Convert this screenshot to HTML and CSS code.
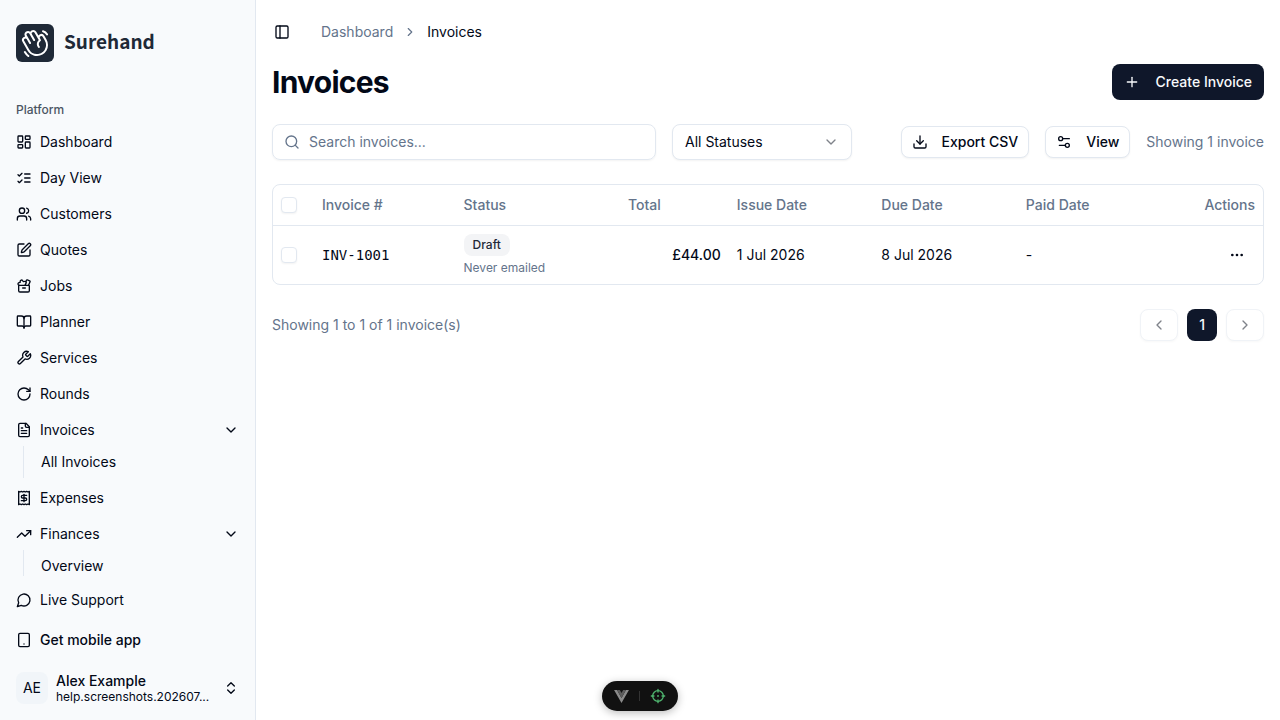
FILE: index.html
```html
<!DOCTYPE html>
<html lang="en">
<head>
  <meta charset="UTF-8">
  <title>Invoices - Surehand</title>
  <meta name="viewport" content="width=device-width,initial-scale=1">
  <link rel="stylesheet" href="styles.css">
</head>
<body>
  <div class="app">
    <aside class="sidebar">
      <a class="brand" href="#">
        <span class="brand-mark">
          <svg viewBox="0 0 256 256" fill="currentColor" aria-hidden="true"><path d="M220.17,100,202.86,70a28,28,0,0,0-38.24-10.25,27.69,27.69,0,0,0-9,8.34L138.2,38a28,28,0,0,0-48.48,0A28,28,0,0,0,48.15,74l1.59,2.76A27.67,27.67,0,0,0,38,80.45a28,28,0,0,0-10.24,38.25l40,69.32a87.47,87.47,0,0,0,53.43,41,88.56,88.56,0,0,0,22.92,3,88,88,0,0,0,76.06-132Zm-6.66,62.64A71.56,71.56,0,0,1,81.64,180l-40-69.32a12,12,0,0,1,20.78-12L81.63,132a8,8,0,1,0,13.85-8L62,66A12,12,0,1,1,82.78,54L114,108a8,8,0,1,0,13.85-8L103.57,58h0a12,12,0,1,1,20.78-12l33.42,57.9a48,48,0,0,0-5.54,60.6,8,8,0,0,0,13.24-9A32,32,0,0,1,172,112a8,8,0,0,0,2.13-10.4L168.23,90A12,12,0,1,1,189,78l17.31,30A71.56,71.56,0,0,1,213.51,162.64ZM184.25,31.71A8,8,0,0,1,194,26a59.62,59.62,0,0,1,36.53,28l.33.57a8,8,0,1,1-13.85,8l-.33-.57a43.67,43.67,0,0,0-26.8-20.5A8,8,0,0,1,184.25,31.71ZM80.89,237a8,8,0,0,1-11.23,1.33A119.56,119.56,0,0,1,40.06,204a8,8,0,0,1,13.86-8,103.67,103.67,0,0,0,25.64,29.72A8,8,0,0,1,80.89,237Z"/></svg>
        </span>
        <span class="brand-name">Surehand</span>
      </a>

      <nav class="nav">
        <div class="nav-label">Platform</div>
        <ul class="nav-list">
          <li><a class="nav-item" href="#"><svg class="icon" viewBox="0 0 24 24"><rect width="7" height="9" x="3" y="3" rx="1"/><rect width="7" height="5" x="14" y="3" rx="1"/><rect width="7" height="9" x="14" y="12" rx="1"/><rect width="7" height="5" x="3" y="16" rx="1"/></svg>Dashboard</a></li>
          <li><a class="nav-item" href="#"><svg class="icon" viewBox="0 0 24 24"><path d="m3 17 2 2 4-4"/><path d="m3 7 2 2 4-4"/><path d="M13 6h8"/><path d="M13 12h8"/><path d="M13 18h8"/></svg>Day View</a></li>
          <li><a class="nav-item" href="#"><svg class="icon" viewBox="0 0 24 24"><path d="M16 21v-2a4 4 0 0 0-4-4H6a4 4 0 0 0-4 4v2"/><circle cx="9" cy="7" r="4"/><path d="M22 21v-2a4 4 0 0 0-3-3.87"/><path d="M16 3.13a4 4 0 0 1 0 7.75"/></svg>Customers</a></li>
          <li><a class="nav-item" href="#"><svg class="icon" viewBox="0 0 24 24"><path d="M12 3H5a2 2 0 0 0-2 2v14a2 2 0 0 0 2 2h14a2 2 0 0 0 2-2v-7"/><path d="M18.375 2.625a1 1 0 0 1 3 3l-9.013 9.014a2 2 0 0 1-.853.505l-2.873.84a.5.5 0 0 1-.62-.62l.84-2.873a2 2 0 0 1 .506-.852z"/></svg>Quotes</a></li>
          <li><a class="nav-item" href="#"><svg class="icon" viewBox="0 0 24 24"><path d="M10 15h4"/><path d="m14.817 10.995-.971-1.45 1.034-1.232a2 2 0 0 0-2.025-3.238l-1.82.364L9.91 3.885a2 2 0 0 0-3.625.748L6.141 6.55l-1.725.426a2 2 0 0 0-.19 3.756l.657.27"/><path d="m18.822 10.995 2.26-5.38a1 1 0 0 0-.557-1.318L16.954 2.9a1 1 0 0 0-1.281.533l-.924 2.122"/><path d="M4 12.006A1 1 0 0 1 4.994 11H19a1 1 0 0 1 1 1v7a2 2 0 0 1-2 2H6a2 2 0 0 1-2-2z"/></svg>Jobs</a></li>
          <li><a class="nav-item" href="#"><svg class="icon" viewBox="0 0 24 24"><path d="M12 7v14"/><path d="M3 18a1 1 0 0 1-1-1V4a1 1 0 0 1 1-1h5a4 4 0 0 1 4 4 4 4 0 0 1 4-4h5a1 1 0 0 1 1 1v13a1 1 0 0 1-1 1h-6a3 3 0 0 0-3 3 3 3 0 0 0-3-3z"/></svg>Planner</a></li>
          <li><a class="nav-item" href="#"><svg class="icon" viewBox="0 0 24 24"><path d="M14.7 6.3a1 1 0 0 0 0 1.4l1.6 1.6a1 1 0 0 0 1.4 0l3.77-3.77a6 6 0 0 1-7.94 7.94l-6.91 6.91a2.12 2.12 0 0 1-3-3l6.91-6.91a6 6 0 0 1 7.94-7.94l-3.76 3.76z"/></svg>Services</a></li>
          <li><a class="nav-item" href="#"><svg class="icon" viewBox="0 0 24 24"><path d="M21 12a9 9 0 1 1-9-9c2.52 0 4.93 1 6.74 2.74L21 8"/><path d="M21 3v5h-5"/></svg>Rounds</a></li>
          <li>
            <button class="nav-item" type="button" aria-expanded="true"><svg class="icon" viewBox="0 0 24 24"><path d="M15 2H6a2 2 0 0 0-2 2v16a2 2 0 0 0 2 2h12a2 2 0 0 0 2-2V7Z"/><path d="M14 2v4a2 2 0 0 0 2 2h4"/><path d="M10 9H8"/><path d="M16 13H8"/><path d="M16 17H8"/></svg>Invoices<svg class="icon nav-end" viewBox="0 0 24 24"><path d="m6 9 6 6 6-6"/></svg></button>
            <ul class="nav-sub">
              <li><a href="#">All Invoices</a></li>
            </ul>
          </li>
          <li><a class="nav-item" href="#"><svg class="icon" viewBox="0 0 24 24"><path d="M4 2v20l2-1 2 1 2-1 2 1 2-1 2 1 2-1 2 1V2l-2 1-2-1-2 1-2-1-2 1-2-1-2 1Z"/><path d="M16 8h-6a2 2 0 1 0 0 4h4a2 2 0 1 1 0 4H8"/><path d="M12 17.5v-11"/></svg>Expenses</a></li>
          <li>
            <button class="nav-item" type="button" aria-expanded="true"><svg class="icon" viewBox="0 0 24 24"><path d="M22 7 13.5 15.5 8.5 10.5 2 17"/><path d="M16 7h6v6"/></svg>Finances<svg class="icon nav-end" viewBox="0 0 24 24"><path d="m6 9 6 6 6-6"/></svg></button>
            <ul class="nav-sub">
              <li><a href="#">Overview</a></li>
            </ul>
          </li>
        </ul>
      </nav>

      <div class="sidebar-footer">
        <a class="nav-item" href="#"><svg class="icon" viewBox="0 0 24 24"><path d="M7.9 20A9 9 0 1 0 4 16.1L2 22Z"/></svg>Live Support</a>
        <button class="nav-item medium" type="button"><svg class="icon" viewBox="0 0 24 24"><rect width="16" height="20" x="4" y="2" rx="2"/><path d="M12 18h.01"/></svg>Get mobile app</button>
        <button class="user" type="button">
          <span class="avatar">AE</span>
          <span class="user-text">
            <span class="user-name">Alex Example</span>
            <span class="user-mail">help.screenshots.202607...</span>
          </span>
          <svg class="icon" viewBox="0 0 24 24"><path d="m7 15 5 5 5-5"/><path d="m7 9 5-5 5 5"/></svg>
        </button>
      </div>
    </aside>

    <div class="page">
      <header class="topbar">
        <button class="toggle" type="button" aria-label="Toggle sidebar"><svg class="icon" viewBox="0 0 24 24"><rect width="18" height="18" x="3" y="3" rx="2"/><path d="M9 3v18"/></svg></button>
        <nav class="crumbs" aria-label="Breadcrumb">
          <a href="#">Dashboard</a>
          <svg class="icon" viewBox="0 0 24 24"><path d="m9 18 6-6-6-6"/></svg>
          <span aria-current="page">Invoices</span>
        </nav>
      </header>

      <main class="content">
        <div class="title-row">
          <h1>Invoices</h1>
          <button class="btn btn-primary" type="button"><svg class="icon" viewBox="0 0 24 24"><path d="M5 12h14"/><path d="M12 5v14"/></svg>Create Invoice</button>
        </div>

        <div class="filters">
          <label class="search">
            <svg class="icon" viewBox="0 0 24 24"><circle cx="11" cy="11" r="8"/><path d="m21 21-4.3-4.3"/></svg>
            <input type="text" placeholder="Search invoices..." aria-label="Search invoices">
          </label>
          <div class="select">
            <select aria-label="Status">
              <option>All Statuses</option>
              <option>Draft</option>
              <option>Paid</option>
            </select>
            <svg class="icon" viewBox="0 0 24 24"><path d="m6 9 6 6 6-6"/></svg>
          </div>
          <div class="filter-actions">
            <button class="btn btn-outline" type="button"><svg class="icon" viewBox="0 0 24 24"><path d="M21 15v4a2 2 0 0 1-2 2H5a2 2 0 0 1-2-2v-4"/><path d="m7 10 5 5 5-5"/><path d="M12 15V3"/></svg>Export CSV</button>
            <button class="btn btn-outline" type="button"><svg class="icon" viewBox="0 0 24 24"><path d="M20 7h-9"/><path d="M14 17H5"/><circle cx="17" cy="17" r="3"/><circle cx="7" cy="7" r="3"/></svg>View</button>
            <span class="muted">Showing 1 invoice</span>
          </div>
        </div>

        <div class="table-wrap">
          <table>
            <thead>
              <tr>
                <th class="col-check"><input type="checkbox" aria-label="Select all"></th>
                <th class="col-number">Invoice #</th>
                <th class="col-status">Status</th>
                <th class="col-total">Total</th>
                <th class="col-date">Issue Date</th>
                <th class="col-date">Due Date</th>
                <th class="col-date">Paid Date</th>
                <th class="col-actions">Actions</th>
              </tr>
            </thead>
            <tbody>
              <tr>
                <td><input type="checkbox" aria-label="Select INV-1001"></td>
                <td class="number">INV-1001</td>
                <td>
                  <span class="badge">Draft</span>
                  <div class="note">Never emailed</div>
                </td>
                <td class="amount">£44.00</td>
                <td>1 Jul 2026</td>
                <td>8 Jul 2026</td>
                <td>-</td>
                <td class="col-actions"><button class="more" type="button" aria-label="Open menu"><svg class="icon" viewBox="0 0 24 24"><circle cx="12" cy="12" r="1"/><circle cx="19" cy="12" r="1"/><circle cx="5" cy="12" r="1"/></svg></button></td>
              </tr>
            </tbody>
          </table>
        </div>

        <div class="pager">
          <span class="muted">Showing 1 to 1 of 1 invoice(s)</span>
          <div class="pages">
            <button class="btn btn-outline step" type="button" aria-label="Previous page" disabled><svg class="icon" viewBox="0 0 24 24"><path d="m15 18-6-6 6-6"/></svg></button>
            <button class="btn btn-primary current" type="button">1</button>
            <button class="btn btn-outline step" type="button" aria-label="Next page" disabled><svg class="icon" viewBox="0 0 24 24"><path d="m9 18 6-6-6-6"/></svg></button>
          </div>
        </div>
      </main>
    </div>
  </div>

  <div class="devtools">
    <button type="button" aria-label="Toggle devtools"><svg class="vue" viewBox="0 0 16 14"><path fill="#8b8b8b" d="M0 0h3.200L8 8.600 12.800 0H16L8 14z"/><path fill="#5c5c5c" d="M3.200 0h3L8 3.200 9.800 0h3L8 8.600z"/></svg></button>
    <span class="divider"></span>
    <button class="inspect" type="button" aria-label="Inspect component"><svg class="icon" viewBox="0 0 24 24"><circle cx="12" cy="12" r="8"/><circle cx="12" cy="12" r=".5"/><path d="M12 2v4M12 18v4M2 12h4M18 12h4"/></svg></button>
  </div>
</body>
</html>
```
FILE: styles.css
```css
* { box-sizing: border-box; }
body { margin: 0; font-family: Inter, "Liberation Sans", sans-serif; font-size: 14px; line-height: 20px; color: #020817; background: #fff; }
a { color: inherit; text-decoration: none; }
button, input, select { font: inherit; color: inherit; }
button { cursor: pointer; }
ul { list-style: none; margin: 0; padding: 0; }
.icon { width: 16px; height: 16px; flex: none; fill: none; stroke: currentColor; stroke-width: 2; stroke-linecap: round; stroke-linejoin: round; }
.muted { color: #64748b; }

.app { display: flex; height: 100vh; }

/* sidebar */
.sidebar { width: 256px; flex: none; display: flex; flex-direction: column; background: #f8fafc; border-right: 1px solid #e2e8f0; }
.brand { display: flex; align-items: center; gap: 10px; padding: 24px 16px; }
.brand-mark { display: flex; align-items: center; justify-content: center; width: 38px; height: 38px; border-radius: 6px; background: #1f2937; color: #fff; }
.brand-mark svg { width: 32px; height: 32px; }
.brand-name { padding-bottom: 4px; font-family: "Noto Sans CJK JP", "Noto Sans", sans-serif; font-size: 19px; line-height: 32px; font-weight: 700; color: #1f2937; }
.nav { flex: 1; min-height: 0; overflow: hidden; padding: 8px 8px 0; }
.nav-label { padding: 0 8px; font-size: 12px; line-height: 32px; font-weight: 500; color: #4b5563; }
.nav-list { display: flex; flex-direction: column; gap: 4px; }
.nav-item { display: flex; align-items: center; gap: 8px; width: 100%; height: 32px; padding: 0 8px; border: 0; border-radius: 6px; background: none; text-align: left; }
.nav-item:hover { background: #f1f5f9; }
.nav-item.medium { font-weight: 500; }
.nav-end { margin-left: auto; }
.nav-sub { margin: 0 15px; padding: 2px 9px; border-left: 1px solid #e2e8f0; }
.nav-sub a { display: block; padding: 4px 8px; }
.sidebar-footer { display: flex; flex-direction: column; gap: 8px; padding: 8px; }
.user { display: flex; align-items: center; gap: 8px; height: 48px; padding: 8px; border: 0; background: none; text-align: left; }
.avatar { display: flex; align-items: center; justify-content: center; flex: none; width: 32px; height: 32px; border-radius: 8px; background: #f1f5f9; }
.user-text { flex: 1; min-width: 0; display: flex; flex-direction: column; }
.user-name { font-weight: 500; line-height: 17px; }
.user-mail { font-size: 12px; line-height: 16px; white-space: nowrap; }

/* page */
.page { flex: 1; min-width: 0; }
.topbar { display: flex; align-items: center; gap: 25px; height: 64px; padding: 0 12px; }
.toggle { display: flex; padding: 6px; border: 0; background: none; }
.crumbs { display: flex; align-items: center; gap: 10px; color: #64748b; }
.crumbs .icon { width: 14px; height: 14px; }
.crumbs span { color: #020817; }
.content { display: flex; flex-direction: column; gap: 24px; padding: 0 16px 16px; }
.title-row { display: flex; align-items: center; justify-content: space-between; }
h1 { margin: 0; font-size: 30px; line-height: 36px; font-weight: 700; letter-spacing: -0.025em; }

.btn { display: inline-flex; align-items: center; justify-content: center; border: 1px solid transparent; border-radius: 8px; font-weight: 500; white-space: nowrap; }
.btn-primary { height: 36px; gap: 16px; padding: 0 11px; background: #0f172a; color: #f8fafc; }
.btn-outline { height: 32px; gap: 14px; padding: 0 10px; background: #fff; border-color: #e2e8f0; box-shadow: 0 1px 2px #0000000d; }

.filters { display: flex; align-items: center; gap: 16px; }
.search { display: flex; align-items: center; gap: 9px; flex: 0 1 384px; min-width: 0; height: 36px; padding: 0 11px; border: 1px solid #e2e8f0; border-radius: 8px; box-shadow: 0 1px 2px #0000000d; color: #64748b; }
.search input { flex: 1; min-width: 0; padding: 0; border: 0; outline: 0; background: none; color: #020817; }
.search input::placeholder { color: #64748b; }
.select { position: relative; flex: none; width: 180px; }
.select select { appearance: none; width: 100%; height: 36px; padding: 0 36px 0 12px; border: 1px solid #e2e8f0; border-radius: 8px; background: #fff; box-shadow: 0 1px 2px #0000000d; }
.select .icon { position: absolute; right: 13px; top: 10px; opacity: .5; pointer-events: none; }
.filter-actions { display: flex; align-items: center; gap: 16px; margin-left: auto; white-space: nowrap; }

/* table */
.table-wrap { border: 1px solid #e2e8f0; border-radius: 8px; overflow: hidden; }
table { width: 100%; table-layout: fixed; border-collapse: collapse; }
th { height: 40px; padding: 0 8px; text-align: left; font-weight: 500; color: #64748b; border-bottom: 1px solid #e2e8f0; }
td { padding: 8px; }
.col-check { width: 41px; }
.col-number { width: 14.3%; }
.col-status { width: 16.6%; }
.col-total { width: 11%; }
.col-date { width: 14.6%; }
.col-actions { text-align: right; }
input[type="checkbox"] { appearance: none; display: block; width: 16px; height: 16px; margin: 0; border: 1px solid #e2e8f0; border-radius: 4px; background: #fff; box-shadow: 0 1px 2px #0000000d; }
input[type="checkbox"]:checked { background: #0f172a; }
.number { font-family: "DejaVu Sans Mono", "Liberation Mono", monospace; font-weight: 500; }
.badge { display: inline-block; padding: 3px 9px; border-radius: 8px; background: #f3f4f6; color: #1f2937; font-size: 12px; line-height: 16px; font-weight: 500; }
.note { margin-top: 4px; font-size: 12px; line-height: 16px; color: #64748b; }
.amount { text-align: right; font-weight: 500; }
.more { display: inline-flex; padding: 8px 10px; border: 0; background: none; vertical-align: middle; }

.pager { display: flex; align-items: center; justify-content: space-between; }
.pages { display: flex; align-items: center; gap: 9px; }
.step:disabled { opacity: .5; }
.current { height: 32px; }

/* floating dev toolbar */
.devtools { position: fixed; left: 50%; bottom: 9px; transform: translateX(-50%); display: flex; align-items: center; gap: 10px; height: 30px; padding: 0 12px; border-radius: 15px; background: #111; box-shadow: 0 2px 8px #0004; }
.devtools button { display: flex; padding: 0; border: 0; background: none; }
.vue { width: 15px; height: 13px; }
.divider { width: 1px; height: 10px; background: #333; }
.inspect { color: #4fb56f; }
```
